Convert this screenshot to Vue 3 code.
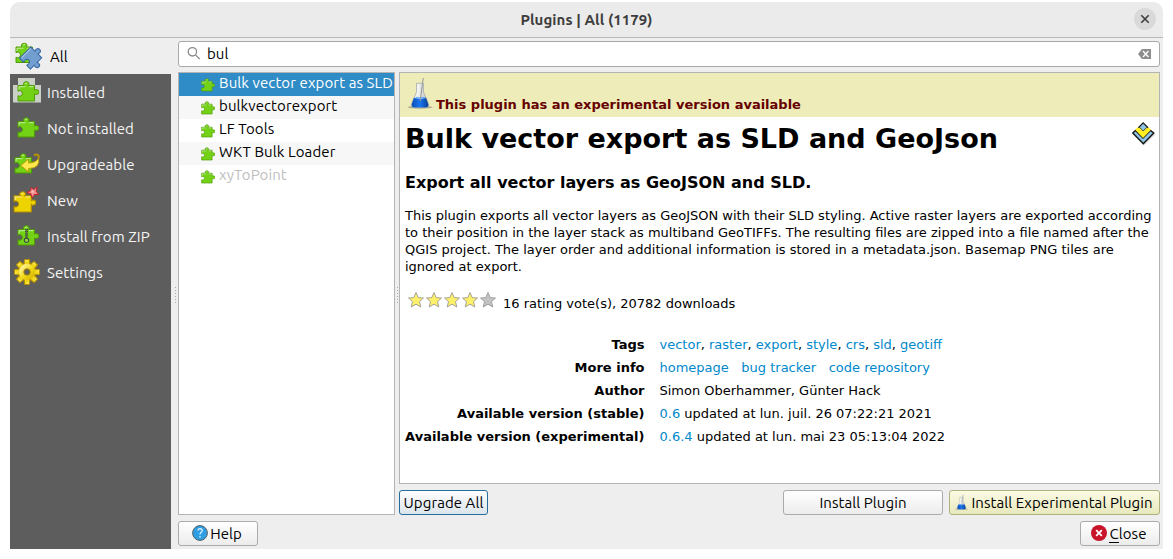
<script setup>
const categories = [
  { id: 'all', label: 'All' },
  { id: 'installed', label: 'Installed' },
  { id: 'available', label: 'Not installed' },
  { id: 'upgrade', label: 'Upgradeable' },
  { id: 'new', label: 'New' },
  { id: 'zip', label: 'Install from ZIP' },
  { id: 'settings', label: 'Settings' },
]
const plugins = ['Bulk vector export as SLD', 'bulkvectorexport', 'LF Tools', 'WKT Bulk Loader', 'xyToPoint']
const tags = ['vector', 'raster', 'export', 'style', 'crs', 'sld', 'geotiff']
const teeth = [0, 45, 90, 135, 180, 225, 270, 315]
</script>

<template>
  <svg class="defs" width="0" height="0" aria-hidden="true">
    <defs>
      <linearGradient id="gold" x1="0" y1="0" x2="1" y2="1">
        <stop offset="0" stop-color="#fff3a0" /><stop offset=".5" stop-color="#f2dc1c" /><stop offset="1" stop-color="#d8b800" />
      </linearGradient>
      <linearGradient id="glass" x1="0" y1="0" x2="1" y2="0">
        <stop offset="0" stop-color="#b9bec0" /><stop offset=".4" stop-color="#f0f2ee" /><stop offset="1" stop-color="#b4b9ba" />
      </linearGradient>
      <linearGradient id="liquid" x1="0" y1="0" x2="1" y2="0">
        <stop offset="0" stop-color="#0a4fb4" /><stop offset=".5" stop-color="#1b76ee" /><stop offset="1" stop-color="#0b3f98" />
      </linearGradient>
      <symbol id="piece" viewBox="0 0 22 21">
        <path d="M1 4.5H7.2Q6.2 3.6 6.5 2.5A2.8 2.3 0 0 1 12 2.5Q12.2 3.6 11.2 4.5H17.5V9.2Q18.5 8.3 19.6 8.7A2.2 2.2 0 0 1 19.6 13.4Q18.5 13.8 17.5 12.9V20H1V14.7Q2 15.6 3.4 15.1A2.8 2.8 0 0 0 3.4 9.7Q2 9.3 1 10.3Z" />
        <path class="shine" d="M2 8.6V5.7H8.4M8 2.8Q9 1.7 10.2 2.2M12 5.7H16.4" />
      </symbol>
      <symbol id="flask" viewBox="0 0 26 32">
        <ellipse cx="13" cy="30.3" rx="12.5" ry="1.5" fill="#77776c" opacity=".55" />
        <path d="M9.5 6.2H16.5V15L21.6 27Q22.4 30.5 19 30.5H7Q3.6 30.5 4.4 27L9.5 15Z" fill="url(#glass)" stroke="#a2a7a5" stroke-width=".7" />
        <path d="M6.8 21Q13 19.2 19.2 21L21.2 27.2Q21.6 30.5 18.5 30.5H7.5Q4.4 30.5 4.8 27.2Z" fill="url(#liquid)" />
        <path d="M7 21Q13 19 19 21Q13 23.3 7 21" fill="#7db7fa" />
        <path d="M13.2 24L15.5 6.5L16.3 1" fill="none" stroke="#92989a" />
        <path d="M11 8V15L7.8 21" fill="none" stroke="#fff" stroke-opacity=".7" />
      </symbol>
    </defs>
  </svg>
  <main class="window">
    <header class="title">
      <h1 class="u">Plugins | All (1179)</h1>
      <button class="dismiss" aria-label="Close window">
        <svg width="22" height="22"><path d="M7.3 7.3L14.7 14.7M14.7 7.3L7.3 14.7" stroke="#3d3d3d" stroke-width="1.6" /></svg>
      </button>
    </header>
    <div class="body">
      <nav class="side">
        <div v-for="c in categories" :key="c.id" class="cat" :class="c.id">
          <svg class="cat-icon" width="36" height="36">
            <template v-if="c.id === 'all'">
              <use href="#piece" class="green" x="5" y="4.5" width="22" height="21" />
              <g transform="translate(21.5 20.2) rotate(45)">
                <path class="blue" d="M-8.5 -8.5H-3Q-2.6 -7.4 -3.1 -6.6A2.6 2.6 0 1 0 1.9 -6.6Q1.4 -7.4 1.8 -8.5H7V-3Q8 -3.8 9 -3.4A2 2 0 0 1 9 1.4Q8 1.8 7 1V7.5H1.4Q2.4 8.8 1.9 9.8A2.3 2.1 0 0 1 -2.8 9.8Q-3.3 8.8 -2.3 7.5H-8.5Z" transform="matrix(0 1 1 0 0 0) rotate(90)" />
                <path d="M-7.3 7V-6.2" fill="none" stroke="#b4cdea" />
              </g>
            </template>
            <template v-else-if="c.id === 'installed'">
              <path d="M8 4H25V11H31V28.5H3V11H8Z" fill="#cbd0c7" />
              <use href="#piece" class="green" x="7" y="7" width="22" height="21" />
            </template>
            <use v-else-if="c.id === 'available'" href="#piece" class="green" x="7" y="7" width="22" height="21" />
            <template v-else-if="c.id === 'upgrade'">
              <use href="#piece" class="green" x="4" y="7" width="22" height="21" />
              <path d="M24 9.6Q26 7.5 28.4 9.4L28.7 12" fill="none" stroke="#b59200" stroke-width="2" />
              <path d="M10.7 19.5L18.6 13V17Q26 17 28.7 11.8Q30.5 22.5 18.6 22.5V26Z" fill="#fce94f" stroke="#b79400" stroke-width=".9" />
            </template>
            <template v-else-if="c.id === 'new'">
              <use href="#piece" class="yellow" x="3" y="9" width="23" height="22" />
              <path d="M21 6L23.7 8L27.3 5.3L26 9.6L28.6 13L24.5 13L22 16.6L21 12.4L16.8 11L20.6 9.3Z" fill="#f58d8d" stroke="#c3252c" transform="translate(0 -.5)" />
              <path d="M22 8L23.5 9.2L24 11L21.5 10.5Z" fill="#ffc1bd" />
            </template>
            <template v-else-if="c.id === 'zip'">
              <use href="#piece" class="green" x="7" y="7" width="22" height="21" />
              <path d="M16.5 11V21" stroke="#3b4a33" stroke-width="3" stroke-dasharray="1.2 .9" />
              <path d="M16.5 11V20" stroke="#55634f" />
              <circle cx="16.5" cy="22.3" r="2.2" fill="#8bd74b" stroke="#3f4a3a" stroke-width="1.1" />
            </template>
            <g v-else transform="translate(17 18)">
              <g fill="url(#gold)" stroke="#b38f00" stroke-width="1">
                <path v-for="t in teeth" :key="t" :transform="`rotate(${t})`" d="M-3 -7L-2.4 -12.5H2.4L3 -7" />
                <circle r="8.5" />
              </g>
              <g fill="#f1d51c"><path v-for="t in teeth" :key="t" :transform="`rotate(${t})`" d="M-2.2 -7L-1.8 -10H1.8L2.2 -7Z" /></g>
              <circle r="5.7" fill="none" stroke="url(#gold)" stroke-width="4.4" />
              <circle r="3.2" fill="#5d5d5d" stroke="#a98700" />
            </g>
          </svg>
          <span class="u">{{ c.label }}</span>
        </div>
      </nav>
      <section class="content">
        <div class="search">
          <svg width="16" height="16" class="lens"><circle cx="5.4" cy="5.8" r="4.2" /><path d="M8.5 8.9L12.6 13" /></svg>
          <span class="u">bul</span>
          <svg width="14" height="10" class="clear"><path d="M4 0H13V10H4L0 5Z" fill="#8d8d8d" /><path d="M5 2L10.5 8M10.5 2L5 8" stroke="#fff" stroke-width="1.3" /></svg>
        </div>
        <div class="split">
          <div class="tree">
            <div v-for="(p, i) in plugins" :key="p" class="row" :class="{ selected: i === 0, odd: i % 2, off: i === 4 }">
              <svg width="14" height="14" class="mini green"><use href="#piece" width="14" height="14" /></svg>
              <span class="u">{{ p }}</span>
            </div>
          </div>
          <i class="handle"></i>
          <div class="right">
            <article class="details">
              <div class="banner">
                <svg width="26" height="32"><use href="#flask" /></svg>
                <b>This plugin has an experimental version available</b>
              </div>
              <svg class="logo" width="24" height="24" viewBox="0 0 24 24">
                <path d="M12 2L23 13L12 23.5L2 13Z" fill="#aaa" opacity=".35" />
                <path d="M.8 11L3.5 8.5L11 16L18.5 8.5L21.8 11L11.3 21.8Z" fill="#8fc3e6" stroke="#151515" stroke-width="1.4" />
                <path d="M3.2 7.8L6 5L11 10L16 5L19 7.8L11 16Z" fill="#ffee22" />
                <path d="M11.2 .9L15.6 5.2L11.2 9.4L6.8 5.2Z" fill="#8fc3e6" stroke="#151515" stroke-width="1.2" />
                <path d="M7 6L11.2 10.2L15.4 6" fill="none" stroke="#ffee22" stroke-width="1.2" />
              </svg>
              <h2>Bulk vector export as SLD and GeoJson</h2>
              <h3>Export all vector layers as GeoJSON and SLD.</h3>
              <p>This plugin exports all vector layers as GeoJSON with their SLD styling. Active raster layers are exported according<br>to their position in the layer stack as multiband GeoTIFFs. The resulting files are zipped into a file named after the<br>QGIS project. The layer order and additional information is stored in a metadata.json. Basemap PNG tiles are<br>ignored at export.</p>
              <div class="rating">
                <svg v-for="n in 5" :key="n" width="18" height="18" viewBox="0 0 18 18">
                  <path d="M9 1.5L11.2 6.6L16.5 7L12.5 10.6L13.8 16L9 13.2L4.2 16L5.5 10.6L1.5 7L6.8 6.6Z" :class="n < 5 ? 'lit' : 'dim'" />
                </svg>
                <span>16 rating vote(s), 20782 downloads</span>
              </div>
              <dl>
                <dt>Tags</dt>
                <dd><template v-for="(t, i) in tags" :key="t"><template v-if="i">, </template><a>{{ t }}</a></template></dd>
                <dt>More info</dt>
                <dd class="links"><a>homepage</a><a>bug tracker</a><a>code repository</a></dd>
                <dt>Author</dt>
                <dd>Simon Oberhammer, Günter Hack</dd>
                <dt>Available version (stable)</dt>
                <dd><a>0.6</a> updated at lun. juil. 26 07:22:21 2021</dd>
                <dt>Available version (experimental)</dt>
                <dd><a>0.6.4</a> updated at lun. mai 23 05:13:04 2022</dd>
              </dl>
            </article>
            <div class="actions">
              <button class="btn upgrade-all"><span class="u">Upgrade All</span></button>
              <button class="btn install"><span class="u">Install Plugin</span></button>
              <button class="btn experimental">
                <svg width="13" height="16" viewBox="0 0 26 32"><use href="#flask" /></svg>
                <span class="u">Install Experimental Plugin</span>
              </button>
            </div>
          </div>
        </div>
        <footer>
          <button class="btn help">
            <svg width="16" height="16"><circle cx="8" cy="8" r="7.4" fill="#2f9fe3" stroke="#555f66" /><path d="M5.9 5.6Q6.2 3.7 8.1 3.7Q10.3 3.8 10.2 5.7Q10.1 6.9 8.8 7.6Q8 8.1 8 9.5M8 11V12.4" fill="none" stroke="#e4f4ff" stroke-width="1.2" /></svg>
            <span class="u">Help</span>
          </button>
          <button class="btn close">
            <svg width="16" height="16"><circle cx="8" cy="8" r="8" fill="#c9152b" /><path d="M5.2 5.2L10.8 10.8M10.8 5.2L5.2 10.8" stroke="#fff" stroke-width="1.9" /></svg>
            <span class="u"><span class="key">C</span>lose</span>
          </button>
        </footer>
      </section>
    </div>
  </main>
</template>

<style>
body { background: #fff; overflow: hidden; }
</style>

<style scoped>
* { box-sizing: border-box; }
h1, h2, h3, p, dl, dd { margin: 0; }
.defs { position: absolute; }
.window { width: 1153px; height: 547px; margin: 2px 0 0 10px; background: #eee; border-radius: 10px 10px 0 0; overflow: hidden; display: flex; flex-direction: column; font-family: "DejaVu Sans", sans-serif; font-size: 13px; color: #000; white-space: nowrap; }
.u { font-family: Ubuntu, "Noto Sans", sans-serif; font-size: 15px; line-height: 18px; letter-spacing: .07px; }
.title { height: 36px; flex: none; background: #ebebeb; border-bottom: 1px solid #b8b8b8; position: relative; display: flex; align-items: center; justify-content: center; }
.title h1 { font-size: 15px; font-weight: 700; color: #3d3d3d; padding-top: 1px; }
.dismiss { position: absolute; right: 7px; top: 6px; width: 22px; height: 22px; border: 0; border-radius: 50%; padding: 0; background: #d9d9d9; }
.dismiss svg { display: block; }
.body { flex: 1; display: flex; min-height: 0; }
.side { width: 161px; background: #5d5d5d; color: #f5f5f5; flex: none; }
.cat { height: 36px; display: flex; align-items: center; }
.cat .u { margin: 2px 0 0 1px; }
.cat.all { background: #eee; color: #000; }
.cat.all .u { margin-left: 4px; }
.green { fill: #73d216; stroke: #4e9a06; }
.yellow { fill: #edd400; stroke: #b08b00; }
.blue { fill: #729fcf; stroke: #3465a4; stroke-width: 1; }
.shine { fill: none; stroke: #fff; stroke-opacity: .6; stroke-width: 1; }
.content { flex: 1; padding: 3px 3px 3px 7px; display: flex; flex-direction: column; position: relative; }
.content::before { content: ""; position: absolute; left: 4px; top: 249px; height: 18px; width: 1px; background: repeating-linear-gradient(#aaa 0 1px, transparent 1px 3px); }
.search { height: 26px; flex: none; border: 1px solid #a9a9a9; border-radius: 3px; background: #fff; display: flex; align-items: center; padding: 0 7px 0 8px; }
.lens { fill: none; stroke: #8b8b8b; stroke-width: 1.3; margin-right: 4px; }
.clear { margin: -1px 0 0 auto; }
.split { margin-top: 5px; height: 443px; display: flex; }
.tree { width: 217px; border: 1px solid #b4b4b4; background: #fff; overflow: hidden; }
.row { height: 23px; display: flex; align-items: center; padding-left: 22px; }
.mini { margin: 0 4px 0 0; overflow: visible; flex: none; }
.row .u { margin-top: -3px; letter-spacing: .1px; }
.odd { background: #f7f7f7; }
.selected { background: #308cc6; color: #fff; }
.off { color: #bebebe; }
.handle { width: 4px; position: relative; }
.handle::after { content: ""; position: absolute; left: 2px; top: 215px; height: 18px; width: 1px; background: repeating-linear-gradient(#aaa 0 1px, transparent 1px 3px); }
.right { flex: 1; display: flex; flex-direction: column; }
.details { height: 412px; border: 1px solid #b4b4b4; background: #fff; position: relative; }
.banner { height: 44px; background: #eeedba; color: #660000; display: flex; padding-left: 7px; }
.banner svg { margin-top: 4px; }
.banner b { margin: 23px 0 0 3px; line-height: 17px; }
.logo { position: absolute; right: 3px; top: 49px; }
h2 { font-size: 27px; line-height: 32px; margin: 6px 0 0 5px; }
h3 { font-size: 16px; line-height: 20px; margin: 18px 0 0 5px; }
p { line-height: 17px; margin: 14px 0 0 5px; }
.rating { display: flex; height: 20px; margin: 16px 0 0 7px; }
.rating span { margin: 4px 0 0 6px; line-height: 17px; }
.rating svg { stroke: #9a9a9a; stroke-width: .9; }
.lit { fill: #fff06a; }
.dim { fill: #c3c3c3; }
dl { display: grid; grid-template-columns: 239.5px auto; column-gap: 15px; grid-auto-rows: 23px; line-height: 23px; margin: 22px 0 0 5px; }
dt { font-weight: 700; text-align: right; }
a { color: #0088cc; }
.links { display: flex; gap: 12.5px; }
.actions { display: flex; margin-top: 6px; }
.btn { height: 25px; border: 1px solid #ababab; border-radius: 3px; background: linear-gradient(#fff, #ececec); color: #000; padding: 0; display: flex; align-items: center; justify-content: center; white-space: nowrap; }
.upgrade-all { width: 89px; border-color: #236d9d; background: linear-gradient(#fdfdfe, #dce5ec); }
.install { width: 160px; margin-left: auto; }
.experimental { width: 211px; margin-left: 6px; border-color: #b1b17d; background: linear-gradient(#fcfbe4, #e8e8be); }
.experimental svg { margin: -1px 3px 0 -1px; }
footer { display: flex; justify-content: space-between; margin-top: 6px; }
.help, .close { width: 80px; gap: 2px; padding-right: 2px; }
.help svg, .close svg { margin-top: -1px; }
.key { border-bottom: 1px solid #000; display: inline-block; line-height: 16px; }
</style>
